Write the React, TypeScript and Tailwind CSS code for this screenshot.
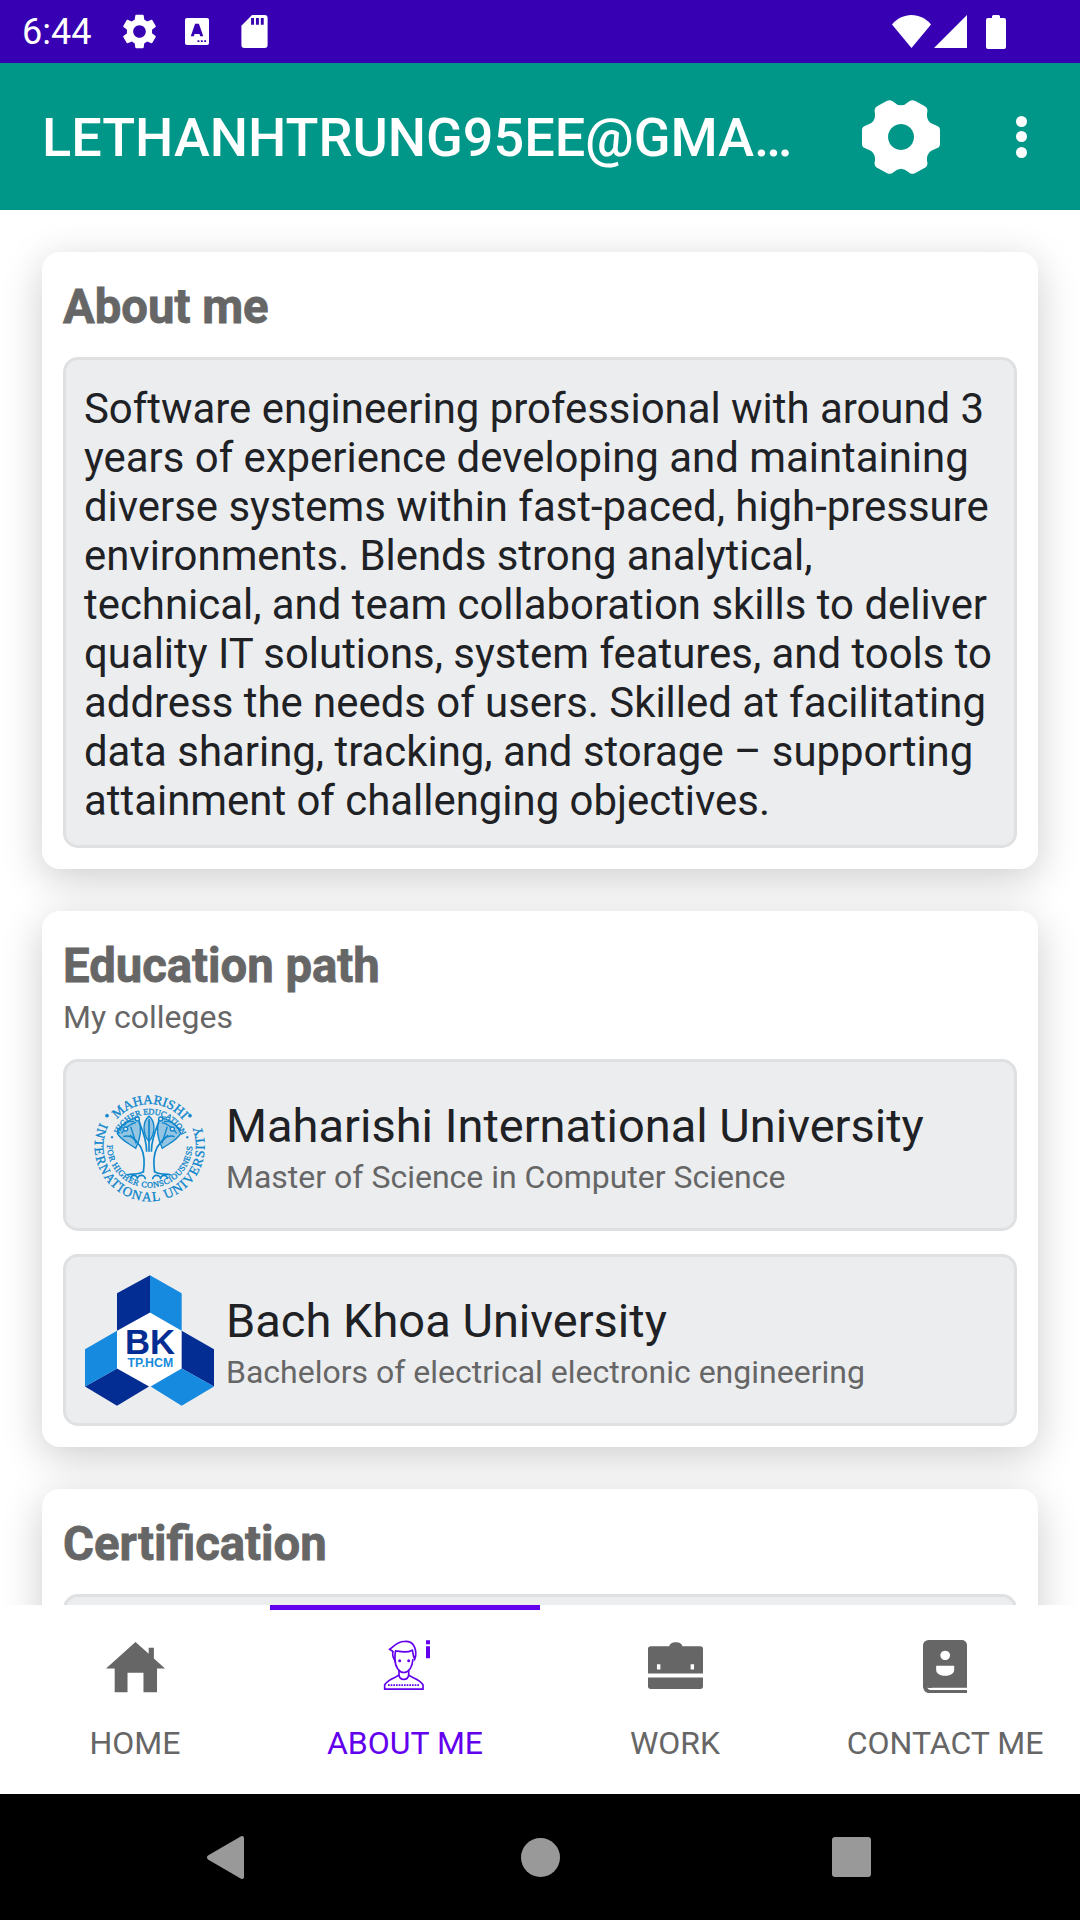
const gearPath = 'M19.14 12.94c.04-.3.06-.61.06-.94 0-.32-.02-.64-.07-.94l2.03-1.58c.18-.14.23-.41.12-.61l-1.92-3.32c-.12-.22-.37-.29-.59-.22l-2.39.96c-.5-.38-1.03-.7-1.62-.94l-.36-2.54c-.04-.24-.24-.41-.48-.41h-3.84c-.24 0-.43.17-.47.41l-.36 2.54c-.59.24-1.13.57-1.62.94l-2.39-.96c-.22-.08-.47 0-.59.22L2.74 8.87c-.12.21-.08.47.12.61l2.03 1.58c-.05.3-.09.63-.09.94s.02.64.07.94l-2.03 1.58c-.18.14-.23.41-.12.61l1.92 3.32c.12.22.37.29.59.22l2.39-.96c.5.38 1.03.7 1.62.94l.36 2.54c.05.24.24.41.48.41h3.84c.24 0 .44-.17.47-.41l.36-2.54c.59-.24 1.13-.56 1.62-.94l2.39.96c.22.08.47 0 .59-.22l1.92-3.32c.12-.22.07-.47-.12-.61l-2.01-1.58zM12 15.6c-1.98 0-3.6-1.62-3.6-3.6s1.62-3.6 3.6-3.6 3.6 1.62 3.6 3.6-1.62 3.6-3.6 3.6z'

function StatusBar() {
  return (
    <div className="h-[63px] shrink-0 bg-[#3700B3] flex items-center text-white pl-[22px] pr-[74px]">
      <span className="text-[36px] w-[102px]">6:44</span>
      <svg className="w-[35px] h-[35px] -ml-[2px]" viewBox="2 2 20 20" fill="white"><path d={gearPath} fillRule="evenodd" /></svg>
      <svg className="w-[24px] h-[27px] ml-[28px]" viewBox="0 0 25 28">
        <path d="M2 0h21a2 2 0 0 1 2 2v24a2 2 0 0 1-2 2H2a2 2 0 0 1-2-2V2a2 2 0 0 1 2-2z" fill="white" />
        <path d="M10.500 6h4L19 19h-3.200l-.7-2.400h-5.200L9.200 19H6z" fill="#3700B3" />
        <path d="M13 23h2v2h-2zM16.500 23h2v2h-2zM20 23h2v2h-2z" fill="#3700B3" />
      </svg>
      <svg className="w-[27px] h-[33px] ml-[32px]" viewBox="0 0 27 34">
        <path d="M11 0h13a3 3 0 0 1 3 3v28a3 3 0 0 1-3 3H3a3 3 0 0 1-3-3V11z" fill="white" />
        <path d="M10 3h3v7h-3zM15 3h3v7h-3zM20 3h3v7h-3z" fill="#3700B3" />
      </svg>
      <div className="flex-1" />
      <svg className="w-[39px] h-[33px]" viewBox="0 0 39 33" fill="white"><path d="M19.500 33 0 9.500C5 3.500 12 0 19.500 0S34 3.500 39 9.500z" /></svg>
      <svg className="w-[33px] h-[33px] ml-[3px]" viewBox="0 0 33 33" fill="white"><path d="M33 0v33H0z" /></svg>
      <svg className="w-[20px] h-[34px] ml-[19px]" viewBox="0 0 20 34" fill="white"><path d="M6 3V1.500A1.500 1.500 0 0 1 7.500 0h5A1.500 1.500 0 0 1 14 1.500V3h4a2 2 0 0 1 2 2v27a2 2 0 0 1-2 2H2a2 2 0 0 1-2-2V5a2 2 0 0 1 2-2z" /></svg>
    </div>
  )
}

function Toolbar() {
  return (
    <div className="h-[147px] shrink-0 bg-[#009688] flex items-center text-white pl-[42px]">
      <div className="w-[755px] truncate text-[54px] leading-[64px] pt-[3px] font-medium">LETHANHTRUNG95EE@GMAIL.COM</div>
      <svg className="w-[78px] h-[74px] ml-[65px]" viewBox="66 57 234 222" fill="white">
        <path fillRule="evenodd" d="M140 60Q152 54 160 62Q183 84 206 62Q214 54 226 60L252 74Q264 80 262 92Q256 120 280 130L292 135Q300 138 300 148V188Q300 198 292 201L280 206Q256 216 262 244Q264 256 252 262L226 276Q214 282 206 274Q183 252 160 274Q152 282 140 276L114 262Q102 256 104 244Q110 216 86 206L74 201Q66 198 66 188V148Q66 138 74 135L86 130Q110 120 104 92Q102 80 114 74ZM183 129a39 39 0 1 0 .1 0z" />
      </svg>
      <div className="ml-[76px] flex flex-col gap-[4.5px]">
        <div className="w-[11px] h-[11px] rounded-full bg-white" />
        <div className="w-[11px] h-[11px] rounded-full bg-white" />
        <div className="w-[11px] h-[11px] rounded-full bg-white" />
      </div>
    </div>
  )
}

function TreeHalf() {
  return (
    <>
      <path d="M178 278C182 250 182 225 172 205C165 190 150 178 138 165M188 215C188 190 180 160 165 125M178 275C165 285 150 280 128 285M160 298a12 12 0 0 1 24 0M140 296a10 10 0 0 1 20 0" strokeWidth="5" />
      <path d="M100 160C115 125 150 110 165 118C175 150 165 185 155 205C135 190 110 180 100 160z" fill="#0f86cc" fillOpacity="0.4" />
      <path d="M112 160C125 140 145 130 156 128M118 170C130 165 150 170 158 185M140 140C145 155 150 170 156 190M150 125C125 120 112 140 100 150" />
      <circle cx="125" cy="147" r="6" fill="#ecedef" />
      <circle cx="160" cy="117" r="6" fill="#ecedef" />
    </>
  )
}

function MiuLogo() {
  return (
    <svg className="w-[130px] h-[130px]" viewBox="0 0 390 390" fill="none">
      <defs>
        <path id="miu-top" d="M99 118A128 128 0 0 1 295 118" />
        <path id="miu-top-in" d="M104 163A102 102 0 0 1 290 163" />
        <path id="miu-bottom" d="M48 128A165 165 0 1 0 346 128" />
        <path id="miu-bottom-in" d="M69 195A128 128 0 1 0 325 195" />
      </defs>
      <g fill="#0f86cc" stroke="#0f86cc" strokeWidth="1" fontFamily="'Liberation Serif', serif">
        <text fontSize="40"><textPath href="#miu-top" textLength="225">MAHARISHI</textPath></text>
        <text fontSize="25"><textPath href="#miu-top-in" textLength="238">HIGHER EDUCATION</textPath></text>
        <text fontSize="40"><textPath href="#miu-bottom" textLength="655">INTERNATIONAL UNIVERSITY</textPath></text>
        <text fontSize="25"><textPath href="#miu-bottom-in" textLength="398">FOR HIGHER CONSCIOUSNESS</textPath></text>
        <circle cx="69" cy="107" r="5" />
        <circle cx="318" cy="107" r="5" />
        <circle cx="84" cy="172" r="3" />
        <circle cx="310" cy="172" r="3" />
      </g>
      <g stroke="#0f86cc" strokeWidth="4">
        <TreeHalf />
        <g transform="matrix(-1 0 0 1 390 0)">
          <TreeHalf />
        </g>
        <path d="M195 215V118" strokeWidth="5" />
        <path d="M195 108C215 125 215 160 195 185C175 160 175 125 195 108z" fill="#0f86cc" fillOpacity="0.4" />
      </g>
    </svg>
  )
}

function BkLogo() {
  return (
    <svg className="w-[129px] h-[131px]" viewBox="75 643 387 392">
      <path d="M270 755 365 810V923L270 977 171 923V810z" fill="white" />
      <g fill="#042d94">
        <path d="M270 643V755L171 810V697z" />
        <path d="M171 923 267 977 171 1035 75 977z" />
        <path d="M365 810 462 865V977L365 923z" />
      </g>
      <g fill="#158ade">
        <path d="M270 643 365 697V810L270 755z" />
        <path d="M171 810V923L75 977V865z" />
        <path d="M365 923 462 977 365 1035 272 977z" />
      </g>
      <text x="270" y="880" textAnchor="middle" fontFamily="'Liberation Sans', sans-serif" fontWeight="700" fontSize="104" fill="#042d94">BK</text>
      <text x="271" y="920" textAnchor="middle" fontFamily="'Liberation Sans', sans-serif" fontWeight="700" fontSize="37" fill="#158ade" textLength="137" lengthAdjust="spacingAndGlyphs">TP.HCM</text>
    </svg>
  )
}

function HomeIcon() {
  return (
    <svg className="w-[59px] h-[52px] mt-[3px]" viewBox="305 150 170 155" fill="#666" preserveAspectRatio="none">
      <path d="M390 153 428 188V170H443V202L475 232H452V303H413V245H367V303H330V232H305z" />
    </svg>
  )
}

function PersonIcon() {
  return (
    <svg className="w-[50px] h-[52px] ml-[6px]" viewBox="70 35 150 155" fill="none" stroke="#6200EE" strokeWidth="5">
      <path d="M90 65C105 55 115 40 135 42C160 40 170 60 168 85L165 95C160 85 160 75 158 68C140 78 120 72 108 70C105 78 106 90 106 100C100 90 98 78 100 72z" />
      <path d="M106 95C106 120 120 135 132 135C148 135 158 118 160 95" />
      <path d="M118 130V142C110 152 90 150 75 172V185H190V172C175 150 155 152 147 142V130M118 142C120 160 145 160 147 142" />
      <path d="M85 173H180" strokeDasharray="5 3" />
      <circle cx="120" cy="100" r="2" fill="#6200EE" />
      <circle cx="147" cy="100" r="2" fill="#6200EE" />
      <path d="M205 38V50M205 56V92" strokeWidth="12" />
    </svg>
  )
}

function WorkIcon() {
  return (
    <svg className="w-[55px] h-[47px]" viewBox="310 155 160 142" fill="#666" preserveAspectRatio="none">
      <path fillRule="evenodd" d="M318 168h54c2-16 36-16 38 0h52a8 8 0 0 1 8 8v74H310v-74a8 8 0 0 1 8-8zM336 222v16h10v-16zM434 222v16h10v-16z" />
      <path d="M310 262h160v27a8 8 0 0 1-8 8H318a8 8 0 0 1-8-8z" />
    </svg>
  )
}

function ContactIcon() {
  return (
    <svg className="w-[44px] h-[53px] mt-[2px]" viewBox="1113 153 127 159" fill="#666" preserveAspectRatio="none">
      <path fillRule="evenodd" d="M1129 153h96a15 15 0 0 1 15 15v128h-96c-10 0-16 2-16 0h-15V169a16 16 0 0 1 16-16zM1177 185a14 14 0 1 0 .1 0zM1151 230v12c0 24 52 24 52 0v-12z" />
      <path d="M1113 290c0 14 8 22 18 22h109v-9h-104c-6 0-10-2-10-8z" />
    </svg>
  )
}

function TabItem({ icon, label, active }: { icon: React.ReactNode; label: string; active?: boolean }) {
  return (
    <div className={`w-[270px] flex flex-col items-center border-t-[5px] ${active ? 'border-[#6200EE] text-[#6200EE]' : 'border-transparent text-[#666]'}`}>
      <div className="h-[54px] mt-[28px] flex items-center justify-center">{icon}</div>
      <div className="text-[32px] leading-[37px] mt-[33px] whitespace-nowrap">{label}</div>
    </div>
  )
}

function SchoolRow({ logo, name, degree }: { logo: React.ReactNode; name: string; degree: string }) {
  return (
    <div className="h-[172px] rounded-[15px] border-[3px] border-[#dfe0e2] bg-[#ecedef] flex items-center pl-[18px]">
      <div className="w-[142px] shrink-0 flex justify-center pr-[12px]">{logo}</div>
      <div className="flex flex-col pt-[4px]">
        <div className="text-[47px] leading-[56px] text-[#202124]">{name}</div>
        <div className="text-[32px] leading-[37px] mt-[5px] text-[#666]">{degree}</div>
      </div>
    </div>
  )
}

function CardTitle({ children }: { children: React.ReactNode }) {
  return <h2 className="text-[47.25px] leading-[56px] pt-[6px] font-bold text-[#666] [-webkit-text-stroke:0.8px_#666]">{children}</h2>
}

export default function App() {
  return (
    <div className="w-[1080px] h-[1920px] flex flex-col bg-white overflow-hidden font-['Roboto',sans-serif]">
      <StatusBar />
      <Toolbar />
      <main className="h-[1395px] shrink-0 overflow-hidden px-[42px] pt-[42px] flex flex-col gap-[42px]">
        <section className="shrink-0 bg-white rounded-[18px] shadow-[0_10px_42px_rgba(0,0,0,0.2)] p-[21px]">
          <CardTitle>About me</CardTitle>
          <div className="mt-[22px] rounded-[15px] border-[3px] border-[#dfe0e2] bg-[#ecedef] px-[18px] pt-[24px] pb-[20px] text-[41.9px] leading-[49px] text-[#202124]">
            Software engineering professional with around 3 years of experience developing and maintaining diverse systems within fast-paced, high-pressure environments. Blends strong analytical, technical, and team collaboration skills to deliver quality IT solutions, system features, and tools to address the needs of users. Skilled at facilitating data sharing, tracking, and storage – supporting attainment of challenging objectives.
          </div>
        </section>
        <section className="shrink-0 bg-white rounded-[18px] shadow-[0_10px_42px_rgba(0,0,0,0.2)] p-[21px]">
          <CardTitle>Education path</CardTitle>
          <div className="text-[32px] leading-[37px] mt-[5px] text-[#666]">My colleges</div>
          <div className="mt-[23px] flex flex-col gap-[23px]">
            <SchoolRow logo={<MiuLogo />} name="Maharishi International University" degree="Master of Science in Computer Science" />
            <SchoolRow logo={<BkLogo />} name="Bach Khoa University" degree="Bachelors of electrical electronic engineering" />
          </div>
        </section>
        <section className="shrink-0 bg-white rounded-[18px] shadow-[0_10px_42px_rgba(0,0,0,0.2)] p-[21px]">
          <CardTitle>Certification</CardTitle>
          <div className="mt-[22px] h-[172px] rounded-[15px] border-[3px] border-[#dfe0e2] bg-[#ecedef]" />
        </section>
      </main>
      <nav className="h-[189px] shrink-0 bg-white flex">
        <TabItem icon={<HomeIcon />} label="HOME" />
        <TabItem icon={<PersonIcon />} label="ABOUT ME" active />
        <TabItem icon={<WorkIcon />} label="WORK" />
        <TabItem icon={<ContactIcon />} label="CONTACT ME" />
      </nav>
      <div className="flex-1 bg-black flex items-center">
        <svg className="w-[37px] h-[43px] ml-[207px]" viewBox="0 0 38 44" fill="#999"><path d="M36 0a2 2 0 0 1 2 2v40a2 2 0 0 1-3 1.700L1 24a2.500 2.500 0 0 1 0-4L35 .3z" /></svg>
        <div className="w-[39px] h-[39px] rounded-full bg-[#999] ml-[277px]" />
        <div className="w-[39px] h-[40px] rounded-[3px] bg-[#999] ml-[272px]" />
      </div>
    </div>
  )
}
